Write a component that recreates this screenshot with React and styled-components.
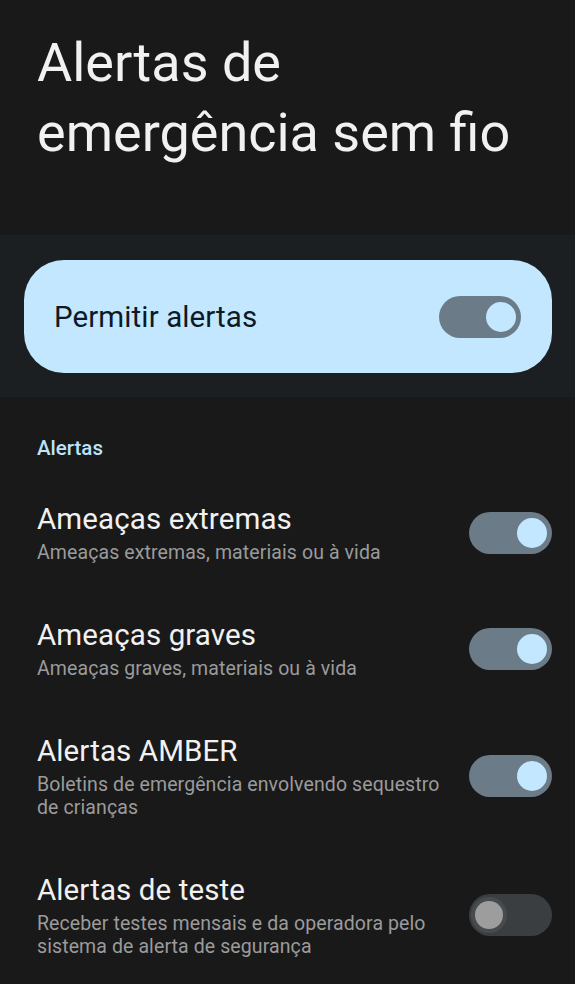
import React from 'react';
import styled, { createGlobalStyle } from 'styled-components';

const GlobalStyle = createGlobalStyle`
  html, body {
    margin: 0;
    padding: 0;
    background: #191919;
  }
  body {
    font-family: Roboto, "Noto Sans", "Liberation Sans", sans-serif;
    -webkit-font-smoothing: antialiased;
  }
`;

const Page = styled.div`
  width: 575px;
  min-height: 984px;
  background: #191919;
  padding-top: 28px;
  box-sizing: border-box;
  overflow: hidden;
`;

const Title = styled.h1`
  margin: 0 0 67px;
  padding: 0 37px;
  font-size: 54px;
  font-weight: 400;
  line-height: 70px;
  color: #f1f1f1;
`;

const Band = styled.div`
  background: #1c1f21;
  padding: 25px 23px 24px 24px;
`;

const MainCard = styled.div`
  display: flex;
  align-items: center;
  justify-content: space-between;
  height: 113px;
  box-sizing: border-box;
  padding: 0 31px 0 30px;
  border-radius: 40px;
  background: #c2e7ff;
`;

const MainLabel = styled.span`
  font-size: 29.5px;
  letter-spacing: 0.1px;
  color: #0d1a25;
`;

const Track = styled.div`
  position: relative;
  flex-shrink: 0;
  width: ${p => p.$w}px;
  height: 42px;
  border-radius: 21px;
  box-sizing: border-box;
  background: ${p => (p.$on ? '#6b7c88' : '#3b3e41')};
`;

const Thumb = styled.div`
  position: absolute;
  top: 50%;
  width: ${p => (p.$on ? 30 : 28)}px;
  height: ${p => (p.$on ? 30 : 28)}px;
  border-radius: 50%;
  transform: translateY(-50%);
  ${p => (p.$on ? 'right: 5px;' : 'left: 6px;')}
  background: ${p => (p.$on ? '#c2e7ff' : '#9d9d9d')};
  box-shadow: ${p => (p.$on ? 'none' : '0 0 0 4px rgba(255,255,255,0.07)')};
`;

const Switch = ({ on, width = 83 }) => (
  <Track $on={on} $w={width}>
    <Thumb $on={on} />
  </Track>
);

const SectionHeader = styled.div`
  padding: 40px 37px 0;
  margin-bottom: 15px;
  font-size: 20.5px;
  line-height: 23px;
  font-weight: 500;
  color: #bde2fb;
`;

const Row = styled.div`
  display: flex;
  align-items: center;
  justify-content: space-between;
  gap: 24px;
  padding: 26px 23px 27px 37px;
`;

const RowText = styled.div`
  display: flex;
  flex-direction: column;
  gap: 4px;
`;

const RowTitle = styled.div`
  font-size: 29.5px;
  line-height: 36px;
  letter-spacing: 0.1px;
  color: #f1f1f1;
`;

const RowSub = styled.div`
  font-size: 19.5px;
  line-height: 23px;
  letter-spacing: 0.1px;
  color: #9b9b9b;
`;

const alerts = [
  { title: 'Ameaças extremas', sub: 'Ameaças extremas, materiais ou à vida', on: true },
  { title: 'Ameaças graves', sub: 'Ameaças graves, materiais ou à vida', on: true },
  { title: 'Alertas AMBER', sub: 'Boletins de emergência envolvendo sequestro de crianças', on: true },
  { title: 'Alertas de teste', sub: 'Receber testes mensais e da operadora pelo sistema de alerta de segurança', on: false },
];

export default function App() {
  return (
    <Page>
      <GlobalStyle />
      <Title>
        Alertas de
        <br />
        emergência sem fio
      </Title>
      <Band>
        <MainCard>
          <MainLabel>Permitir alertas</MainLabel>
          <Switch on width={82} />
        </MainCard>
      </Band>
      <SectionHeader>Alertas</SectionHeader>
      {alerts.map(a => (
        <Row key={a.title}>
          <RowText>
            <RowTitle>{a.title}</RowTitle>
            <RowSub>{a.sub}</RowSub>
          </RowText>
          <Switch on={a.on} />
        </Row>
      ))}
    </Page>
  );
}
